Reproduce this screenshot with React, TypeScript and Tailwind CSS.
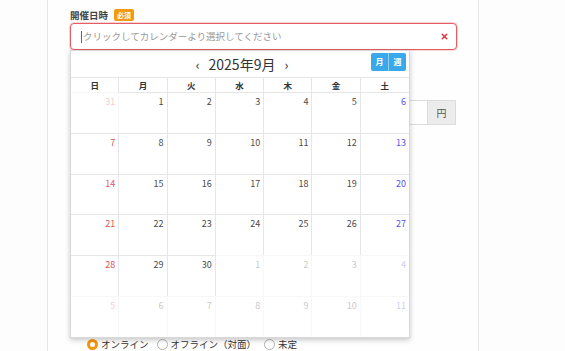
import { X } from 'lucide-react'

const weeks: number[][] = [
  [31, 1, 2, 3, 4, 5, 6],
  [7, 8, 9, 10, 11, 12, 13],
  [14, 15, 16, 17, 18, 19, 20],
  [21, 22, 23, 24, 25, 26, 27],
  [28, 29, 30, 1, 2, 3, 4],
  [5, 6, 7, 8, 9, 10, 11],
]

const dayNames = ['日', '月', '火', '水', '木', '金', '土']

function dateColor(col: number) {
  if (col === 0) return 'text-[#e2525c]'
  if (col === 6) return 'text-[#5555ee]'
  return 'text-[#4a4a4a]'
}

function Calendar() {
  return (
    <div className="absolute left-0 top-full z-10 w-[340px] bg-white border border-[#d9d9d9] shadow-[0_2px_5px_rgba(0,0,0,0.22)]">
      <div className="relative flex h-[26px] items-center justify-center gap-[9px] pl-[4px] text-[#333]">
        <span className="text-[13px] leading-none">‹</span>
        <span className="text-[14px] leading-none">2025年9月</span>
        <span className="text-[13px] leading-none">›</span>
        <div className="absolute right-[3px] top-[2px] flex h-[18px] overflow-hidden rounded-[2px] text-[8px] font-bold text-white">
          <div className="flex w-[17px] items-center justify-center bg-[#3aa9ea]">月</div>
          <div className="flex w-[18px] items-center justify-center border-l border-[#8fd0f5] bg-[#3aa9ea]">週</div>
        </div>
      </div>
      <div className="grid grid-cols-7">
        {dayNames.map((d, i) => (
          <div
            key={d}
            className={`flex h-[15px] items-center justify-center border-t border-[#e6e6e6] text-[8.5px] font-bold text-[#333] ${i < 6 ? 'border-r' : ''}`}
          >
            {d}
          </div>
        ))}
        {weeks.map((w, r) =>
          w.map((n, c) => {
            const other = (r === 0 && n > 20) || (r >= 4 && n < 15)
            return (
              <div
                key={`${r}-${c}`}
                className={`h-[40.8px] border-t border-[#e6e6e6] pr-[3px] pt-[3px] text-right text-[9px] leading-[12px] ${c < 6 ? 'border-r' : ''} ${dateColor(c)} ${other ? 'opacity-30' : ''}`}
              >
                {n}
              </div>
            )
          }),
        )}
      </div>
    </div>
  )
}

function Radio({ checked, label }: { checked?: boolean; label: string }) {
  return (
    <div className="flex items-center gap-[3px]">
      {checked ? (
        <span className="h-[11px] w-[11px] rounded-full border-[3px] border-[#f5960f] bg-white" />
      ) : (
        <span className="h-[11px] w-[11px] rounded-full border border-[#b5b5b5] bg-white" />
      )}
      <span className="text-[9.5px] leading-none text-[#333]">{label}</span>
    </div>
  )
}

export default function App() {
  return (
    <div
      className="relative h-[351px] w-[565px] overflow-hidden bg-[#fdfdfd]"
      style={{ fontFamily: '"Noto Sans CJK JP", "Noto Sans", sans-serif' }}
    >
      <div className="ml-[47px] h-full w-[432px] border-x border-[#e6e6e6] bg-[#fefefe] pl-[22px] pr-[21px] pt-[8px]">
        <div className="flex h-[14px] items-center gap-[6px]">
          <span className="text-[9.5px] font-bold text-[#444]">開催日時</span>
          <span className="flex h-[12px] items-center rounded-[2px] bg-[#f39a12] px-[3px] text-[7px] font-bold text-white">
            必須
          </span>
        </div>
        <div className="relative mt-[1px]">
          <div className="flex h-[27px] items-center rounded-[4px] border border-[#e35d62] bg-white pl-[10px] pr-[7px] shadow-[0_0_0_1px_rgba(227,93,98,0.25)]">
            <span className="h-[12px] w-px bg-[#666]" />
            <span className="ml-[1px] flex-1 text-[9.5px] text-[#999]">クリックしてカレンダーより選択してください</span>
            <X className="h-[9px] w-[9px] text-[#e0343c]" strokeWidth={4} />
          </div>
          <Calendar />
        </div>
        <div className="mt-[50px] flex h-[25px] w-[386px]">
          <div className="flex-1 border border-r-0 border-[#dcdcdc] bg-white" />
          <div className="flex w-[29px] items-center justify-center border border-[#dcdcdc] bg-[#ececec] text-[10px] text-[#555]">
            円
          </div>
        </div>
        <div className="mt-[213px] flex h-[13px] items-center gap-[8px] pl-[17px]">
          <Radio checked label="オンライン" />
          <Radio label="オフライン（対面）" />
          <Radio label="未定" />
        </div>
      </div>
    </div>
  )
}
